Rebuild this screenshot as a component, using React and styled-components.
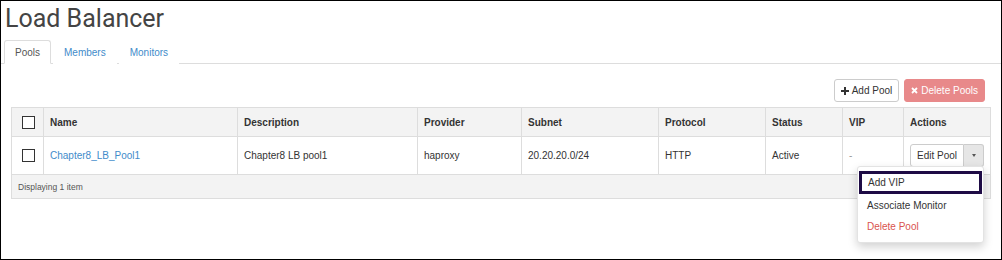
import React from "react";
import styled, { createGlobalStyle } from "styled-components";

const GlobalStyle = createGlobalStyle`
  html, body {
    margin: 0;
    padding: 0;
    background: #fff;
  }
  body {
    font-family: "Liberation Sans", Arial, sans-serif;
    color: #333;
  }
`;

const Frame = styled.div`
  position: relative;
  box-sizing: border-box;
  width: 1002px;
  height: 260px;
  border: 1px solid #000;
  overflow: hidden;
  font-family: "Liberation Sans", Arial, sans-serif;
`;

const Title = styled.h1`
  margin: 0;
  padding: 3px 0 0 4px;
  height: 39px;
  box-sizing: border-box;
  font-family: Roboto, sans-serif;
  font-weight: 400;
  font-size: 25px;
  line-height: 30px;
  color: #444;
`;

const Tabs = styled.ul`
  display: flex;
  margin: 0;
  padding: 0 0 0 3px;
  list-style: none;
  border-bottom: 1px solid #ddd;
  height: 23px;
`;

const Tab = styled.li`
  box-sizing: border-box;
  height: 24px;
  padding: 0 10px;
  margin-right: 2px;
  font-size: 10px;
  line-height: 23px;
  color: ${(p) => (p.$active ? "#555" : "#428bca")};
  background: #fff;
  border: 1px solid ${(p) => (p.$active ? "#ddd" : "transparent")};
  border-bottom-color: ${(p) => (p.$active ? "#fff" : "transparent")};
  border-radius: 3px 3px 0 0;
`;

const Toolbar = styled.div`
  display: flex;
  justify-content: flex-end;
  gap: 5px;
  padding: 15px 16px 5px 0;
`;

const Button = styled.button`
  display: inline-flex;
  align-items: center;
  gap: 3px;
  box-sizing: border-box;
  height: 23px;
  padding: 0 6px;
  font-family: "Liberation Sans", Arial, sans-serif;
  font-size: 10px;
  border-radius: 3px;
  border: 1px solid ${(p) => (p.$danger ? "#e8898a" : "#ccc")};
  background: ${(p) => (p.$danger ? "#e8898a" : "#fff")};
  color: ${(p) => (p.$danger ? "#fff" : "#333")};
`;

const Table = styled.table`
  margin-left: 10px;
  width: 980px;
  border-collapse: collapse;
  table-layout: fixed;
  font-family: "Liberation Sans", Arial, sans-serif;
  font-size: 10px;
  border: 1px solid #ddd;
`;

const Th = styled.th`
  height: 28px;
  padding: 0 0 0 6px;
  text-align: left;
  font-weight: bold;
  background: #f3f3f3;
  border: 1px solid #ddd;
  color: #333;
`;

const Td = styled.td`
  height: 37px;
  padding: 0 0 0 6px;
  border: 1px solid #ddd;
  color: ${(p) => (p.$muted ? "#999" : "#333")};
  position: relative;
`;

const FootCell = styled.td`
  height: 23px;
  padding: 0 0 0 6px;
  background: #f3f3f3;
  font-size: 8.5px;
  color: #555;
  border: 1px solid #ddd;
`;

const Check = styled.span`
  display: block;
  box-sizing: border-box;
  width: 13px;
  height: 13px;
  margin-left: 4px;
  border: 1.5px solid #333;
  background: #fff;
`;

const NameLink = styled.span`
  color: #428bca;
`;

const SplitButton = styled.div`
  display: inline-flex;
  height: 23px;
`;

const SplitMain = styled.span`
  display: flex;
  align-items: center;
  box-sizing: border-box;
  padding: 0 6px;
  height: 23px;
  border: 1px solid #ccc;
  border-radius: 3px 0 0 3px;
  background: #fff;
  color: #333;
`;

const SplitCaret = styled.span`
  display: flex;
  align-items: center;
  justify-content: center;
  box-sizing: border-box;
  width: 20px;
  height: 23px;
  border: 1px solid #ccc;
  border-left: none;
  border-radius: 0 3px 3px 0;
  background: #e6e6e6;

  &::after {
    content: "";
    border-left: 2.5px solid transparent;
    border-right: 2.5px solid transparent;
    border-top: 3px solid #555;
  }
`;

const Menu = styled.ul`
  position: absolute;
  top: 29px;
  left: -47px;
  z-index: 2;
  box-sizing: border-box;
  width: 127px;
  margin: 0;
  padding: 4px 1px 5px;
  list-style: none;
  background: #fff;
  border: 1px solid #e3e3e3;
  border-radius: 3px;
  box-shadow: 0 4px 10px rgba(0, 0, 0, 0.18);
`;

const MenuItem = styled.li`
  box-sizing: border-box;
  height: ${(p) => (p.$focused ? "23px" : "21px")};
  padding: 0 ${(p) => (p.$focused ? "6px" : "8px")};
  line-height: ${(p) => (p.$focused ? "17px" : "21px")};
  font-size: 10px;
  color: ${(p) => (p.$danger ? "#d9534f" : "#333")};
  border: ${(p) => (p.$focused ? "3px solid #1e0b45" : "none")};
  margin-bottom: ${(p) => (p.$focused ? "1px" : "0")};
`;

const columns = [
  ["", 32],
  ["Name", 194],
  ["Description", 180],
  ["Provider", 104],
  ["Subnet", 137],
  ["Protocol", 107],
  ["Status", 77],
  ["VIP", 61],
  ["Actions", 87],
];

const PlusIcon = () => (
  <svg width="8" height="8" viewBox="0 0 8 8">
    <path d="M3 0h2v3h3v2H5v3H3V5H0V3h3z" fill="#333" />
  </svg>
);

const CrossIcon = () => (
  <svg width="7" height="7" viewBox="0 0 7 7">
    <path d="M1 1l5 5M6 1L1 6" stroke="#fff" strokeWidth="1.8" />
  </svg>
);

export default function App() {
  return (
    <>
      <GlobalStyle />
      <Frame>
        <Title>Load Balancer</Title>
        <Tabs>
          <Tab $active>Pools</Tab>
          <Tab>Members</Tab>
          <Tab>Monitors</Tab>
        </Tabs>
        <Toolbar>
          <Button>
            <PlusIcon />
            Add Pool
          </Button>
          <Button $danger>
            <CrossIcon />
            Delete Pools
          </Button>
        </Toolbar>
        <Table>
          <colgroup>
            {columns.map(([name, w]) => (
              <col key={name || "check"} style={{ width: w }} />
            ))}
          </colgroup>
          <thead>
            <tr>
              {columns.map(([name]) =>
                name ? (
                  <Th key={name}>{name}</Th>
                ) : (
                  <Th key="check">
                    <Check />
                  </Th>
                )
              )}
            </tr>
          </thead>
          <tbody>
            <tr>
              <Td>
                <Check />
              </Td>
              <Td>
                <NameLink>Chapter8_LB_Pool1</NameLink>
              </Td>
              <Td>Chapter8 LB pool1</Td>
              <Td>haproxy</Td>
              <Td>20.20.20.0/24</Td>
              <Td>HTTP</Td>
              <Td>Active</Td>
              <Td $muted>-</Td>
              <Td>
                <SplitButton>
                  <SplitMain>Edit Pool</SplitMain>
                  <SplitCaret />
                </SplitButton>
                <Menu>
                  <MenuItem $focused>Add VIP</MenuItem>
                  <MenuItem>Associate Monitor</MenuItem>
                  <MenuItem $danger>Delete Pool</MenuItem>
                </Menu>
              </Td>
            </tr>
          </tbody>
          <tfoot>
            <tr>
              <FootCell colSpan={9}>Displaying 1 item</FootCell>
            </tr>
          </tfoot>
        </Table>
      </Frame>
    </>
  );
}
